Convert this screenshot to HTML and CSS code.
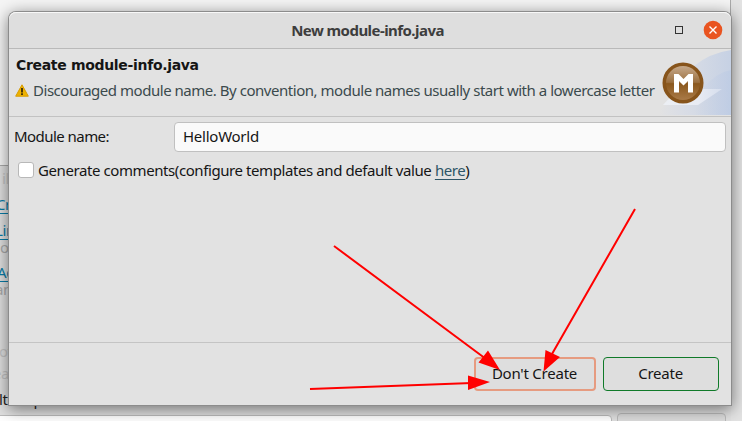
FILE: index.html
```html
<!DOCTYPE html>
<html lang="en">
<head>
<meta charset="utf-8">
<title>New module-info.java</title>
<link rel="stylesheet" href="styles.css">
</head>
<body>
<div class="desktop">
  <div class="page-behind"></div>
  <div class="panel-behind"></div>
  <div class="links-behind">
    <span class="faint">il</span>
    <a>Cr</a>
    <a>Lin</a>
    <span>o</span>
    <a>Ad</a>
    <span>an</span>
    <span class="faint">ov</span>
    <span class="faint">ea</span>
    <span class="dark">lt outp</span>
  </div>
  <div class="field-behind"></div>
  <div class="button-behind"></div>

  <main class="dialog">
    <header class="titlebar">
      <h1>New module-info.java</h1>
      <div class="controls">
        <svg width="8" height="8" viewBox="0 0 8 8"><rect x=".5" y=".5" width="7" height="7" fill="none" stroke="#333"/></svg>
        <svg width="20" height="20" viewBox="0 0 20 20"><circle cx="10" cy="10" r="9.3" fill="#e95420"/><path d="M6.5 6.5l7 7m0-7l-7 7" stroke="#fff" stroke-width="1.4"/></svg>
      </div>
    </header>
    <section class="banner">
      <div class="banner-text">
        <h2>Create module-info.java</h2>
        <p><svg width="14" height="13" viewBox="0 0 14 13"><path d="M7 .8L13.300 12.200H.7z" fill="#edb200" stroke="#d79b00" stroke-linejoin="round"/><path d="M7 4v4.500M7 9.300v1.600" stroke="#3b2a08" stroke-width="1.8"/></svg><span class="message">Discouraged module name. By convention, module names usually start with a lowercase letter</span></p>
      </div>
      <svg class="art" width="75" height="66" viewBox="0 0 75 66">
        <defs>
          <linearGradient id="sky"><stop offset=".05" stop-color="#d4daea" stop-opacity="0"/><stop offset=".5" stop-color="#d6dbe5"/><stop offset="1" stop-color="#c6d1e4"/></linearGradient>
          <linearGradient id="fold"><stop offset="0" stop-color="#c0cce4" stop-opacity="0"/><stop offset="1" stop-color="#b8c8e4" stop-opacity=".5"/></linearGradient>
          <linearGradient id="sheet"><stop offset="0" stop-color="#eceff4"/><stop offset=".6" stop-color="#e8ebf3"/><stop offset="1" stop-color="#d6deed"/></linearGradient>
          <linearGradient id="coin" x2="0" y2="1"><stop offset="0" stop-color="#c6a98b"/><stop offset=".48" stop-color="#9c7040"/><stop offset=".52" stop-color="#8b581d"/><stop offset="1" stop-color="#a97a48"/></linearGradient>
        </defs>
        <path d="M0 66L12 53 38 17Q54 4 75 1V66z" fill="url(#sky)"/>
        <path d="M46 40Q61 23 75 21V66H38z" fill="url(#fold)"/>
        <path d="M22 40L66 40 42 56H7z" fill="url(#sheet)"/>
        <circle cx="27" cy="34" r="18.500" fill="#8e5b20" stroke="#87541b" stroke-width="4"/>
        <circle cx="27" cy="34" r="17" fill="url(#coin)"/>
        <path d="M18 43.500V25H22.500L27.500 30 32.500 25H37V43.500H32V32L27.500 36.500 23 32V43.500z" fill="#fff"/>
      </svg>
    </section>
    <section class="form">
      <label class="row"><span class="name-label">Module name:</span><span class="field"><span class="value">HelloWorld</span></span></label>
      <label class="check"><span class="box"></span><span class="comment">Generate comments(configure templates and default value <a>here</a>)</span></label>
    </section>
    <footer class="actions">
      <button class="dont"><span>Don't Create</span></button>
      <button class="create"><span>Create</span></button>
    </footer>
  </main>

  <svg class="arrows" width="742" height="421" viewBox="0 0 742 421">
    <g stroke="#f00" stroke-width="2"><path d="M334 246L486 359M635 209L552 354M310 389L472 383"/></g>
    <g fill="#f00"><path d="M500 370L478.500 362.500 488 350.500zM543.500 371.500L545.500 350 560 357zM490 382L468 375.500V390z"/></g>
  </svg>
</div>
</body>
</html>
```
FILE: styles.css
```css
*{box-sizing:border-box}
body{margin:0;font:15px "Noto Sans",sans-serif;color:#151515}
h1,h2,p{margin:0;white-space:nowrap}
.desktop{position:relative;width:742px;height:421px;overflow:hidden;background:#e3e3e3}
.page-behind{position:absolute;left:-2px;top:-2px;width:733px;height:168px;background:#f5f5f5;border:1px solid #aaa}
.panel-behind{position:absolute;left:0;top:166px;width:731px;height:255px;background:#e0e0e0}
.links-behind span,.links-behind a{position:absolute;left:0;color:#aaa;line-height:20px;white-space:nowrap;letter-spacing:-.4px}
.links-behind a{left:-3px;color:#087ca7;text-decoration:underline;text-underline-offset:3px}
.links-behind :nth-child(1){top:168px;left:2px}
.links-behind :nth-child(2){top:194px;left:-4px}
.links-behind :nth-child(3){top:220px;left:-5px}
.links-behind :nth-child(4){top:237px}
.links-behind :nth-child(5){top:262px}
.links-behind :nth-child(6){top:279px;left:-5px}
.links-behind :nth-child(7){top:341px;left:-1px}
.links-behind :nth-child(8){top:363px;left:-7px}
.links-behind :nth-child(9){top:389px;left:-1px}
.links-behind .faint{color:#c4c4c4}
.links-behind .dark{color:#222}
.field-behind{position:absolute;left:-5px;top:415px;width:617px;height:20px;background:#fff;border:1px solid #bbb;border-radius:4px}
.button-behind{position:absolute;left:617px;top:413px;width:109px;height:20px;background:#dcdcdc;border:1px solid #bbb;border-radius:4px}
.dialog{position:absolute;left:9px;top:12px;width:722px;height:393px;display:flex;flex-direction:column;background:#e2e2e2;border-radius:7px 7px 0 0;box-shadow:0 0 0 1px #8c8c8c,0 3px 16px 1px rgba(0,0,0,.5)}
.titlebar{height:37px;display:grid;place-items:center;border-bottom:1px solid #b9b9b9;background:#dedede;border-radius:7px 7px 0 0;box-shadow:inset 0 1px #f8f8f8}
.titlebar>*{grid-area:1/1}
h1{font-size:15px;line-height:36px;font-weight:700;color:#3d3d3d;letter-spacing:-.55px;padding-right:5px}
.controls{justify-self:end;display:flex;align-items:center;gap:20px;padding-right:8px}
.banner{height:68px;display:flex;justify-content:space-between;border-bottom:1px solid #c2c2c2}
.banner-text{padding:6px 0 0 6px;flex:1;min-width:0}
h2{font:700 14px/20px "DejaVu Sans",sans-serif;padding-left:1px;letter-spacing:-.32px}
p{display:flex;align-items:center;gap:4px;height:30px;color:#3b4a4d}
.message{letter-spacing:-.47px}
.art{flex:none;margin-left:-75px}
.form{height:225px;padding:5px}
.row{display:flex;align-items:center}
.name-label{width:160px;letter-spacing:-.55px;padding-bottom:2px}
.field{flex:1;height:30px;line-height:26px;background:#fafafa;border:1px solid #c0c0c0;border-radius:4px;padding-left:8px}
.value{letter-spacing:-.25px}
.check{display:flex;align-items:center;gap:4px;padding:8px 0 0 4px}
.box{width:16px;height:16px;background:#fff;border:1px solid #b8b8b8;border-radius:3px}
.comment{letter-spacing:-.415px}
.comment a{color:#2d5566;text-decoration:underline;text-underline-offset:3px}
.actions{flex:1;display:flex;justify-content:flex-end;align-items:flex-start;gap:7px;padding:14px 12px 0;border-top:1px solid #c4c4c4}
button{height:34px;border-radius:4px;background:#dedede;font:15px "Noto Sans",sans-serif;padding:0 1px 2px 0;color:#151515;letter-spacing:-.23px}
.dont{width:122px;border:2px solid #e69b80}
.create{width:116px;border:1px solid #107a29}
.arrows{position:absolute;inset:0}
```
